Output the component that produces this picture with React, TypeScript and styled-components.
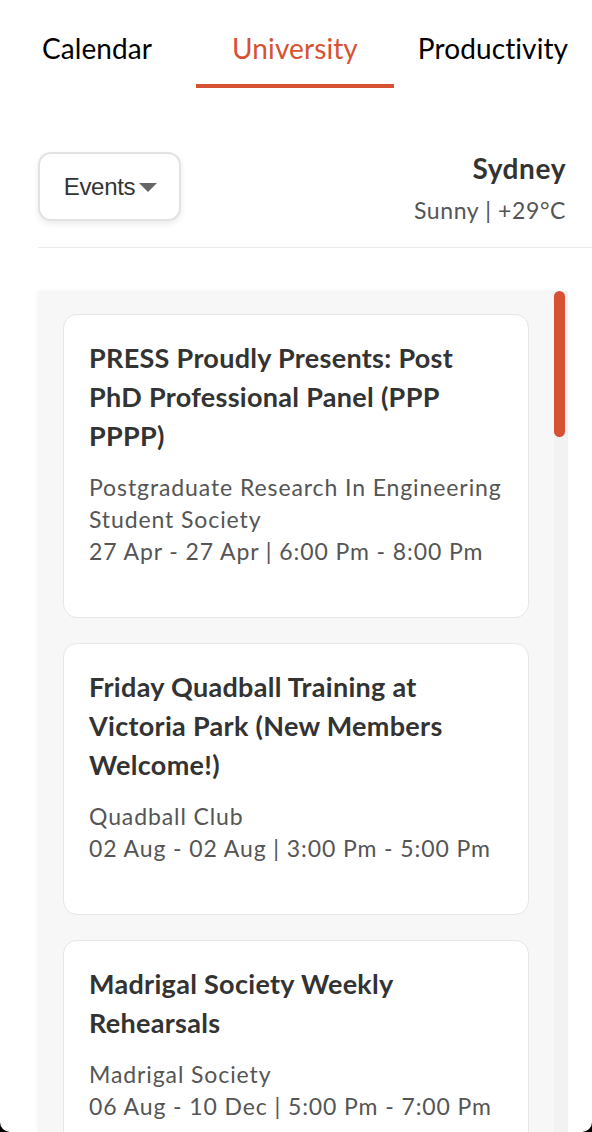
import React, { useState } from "react";
import styled, { createGlobalStyle } from "styled-components";

const GlobalStyle = createGlobalStyle`
  html, body { margin: 0; padding: 0; background: #000; }
  body { font-family: "Lato", "Noto Sans", sans-serif; }
  * { box-sizing: border-box; }
`;

const ACCENT = "#d65233";

const Page = styled.div`
  width: 592px;
  height: 1132px;
  background: #fff;
  border-radius: 0 0 10px 10px;
  overflow: hidden;
  display: flex;
  flex-direction: column;
`;

const TabBar = styled.nav`
  display: flex;
  margin-left: -2px;
`;

const Tab = styled.button<{ $active?: boolean }>`
  width: 200px;
  height: 88px;
  padding: 12px 0 0;
  border: none;
  border-bottom: 4px solid ${(p) => (p.$active ? ACCENT : "transparent")};
  background: none;
  font-family: "Lato", sans-serif;
  font-size: 28px;
  letter-spacing: 0.1px;
  color: ${(p) => (p.$active ? ACCENT : "#000")};
  display: flex;
  align-items: center;
  justify-content: center;
  cursor: pointer;
`;

const Header = styled.header`
  margin: 64px 0 0 38px;
  padding: 0 26px 23px 0;
  border-bottom: 1px solid #ebebeb;
  display: flex;
  justify-content: space-between;
  align-items: flex-start;
`;

const Dropdown = styled.button`
  width: 143px;
  height: 69px;
  border: 2px solid #e2e2e2;
  border-radius: 13px;
  background: #fff;
  box-shadow: 0 3px 6px rgba(0, 0, 0, 0.08);
  display: flex;
  align-items: center;
  justify-content: center;
  gap: 4px;
  font-family: "Liberation Sans", Arial, sans-serif;
  font-size: 24px;
  letter-spacing: -0.3px;
  color: #333;
  padding: 0 0 0 2px;
`;

const Caret = styled.span`
  width: 0;
  height: 0;
  border-left: 9px solid transparent;
  border-right: 9px solid transparent;
  border-top: 9px solid #666;
  margin-top: 1px;
`;

const Weather = styled.div`
  display: flex;
  flex-direction: column;
  align-items: flex-end;
`;

const City = styled.div`
  font-size: 28px;
  font-weight: 700;
  letter-spacing: 0.6px;
  color: #333;
  line-height: 32px;
`;

const Conditions = styled.div`
  font-size: 23px;
  letter-spacing: 0.6px;
  color: #555;
  line-height: 28px;
  margin-top: 12px;
`;

const Panel = styled.section`
  margin: 43px 0 0 38px;
  width: 530px;
  flex: 1;
  min-height: 0;
  background: #f7f7f7;
  box-shadow: -1px 0 4px rgba(0, 0, 0, 0.04);
  display: flex;
`;

const List = styled.div`
  flex: 1;
  padding: 23px 25px;
  display: flex;
  flex-direction: column;
  gap: 25px;
  overflow: hidden;
`;

const Track = styled.div`
  width: 14px;
  background: #f2f2f2;
`;

const Thumb = styled.div`
  width: 11px;
  height: 146px;
  border-radius: 6px;
  background: ${ACCENT};
`;

const Card = styled.article`
  flex-shrink: 0;
  background: #fff;
  border: 1.5px solid #e6e6e6;
  border-radius: 14px;
  padding: 23px 25px 50px;
`;

const Title = styled.h3`
  margin: 0;
  font-size: 27px;
  font-weight: 700;
  letter-spacing: 0.3px;
  line-height: 39px;
  color: #333;
`;

const Meta = styled.p`
  margin: 16px 0 0;
  font-size: 23px;
  letter-spacing: 0.9px;
  line-height: 32px;
  color: #555;
`;

const events = [
  {
    title: "PRESS Proudly Presents: Post PhD Professional Panel (PPP PPPP)",
    org: "Postgraduate Research In Engineering Student Society",
    when: "27 Apr - 27 Apr | 6:00 Pm - 8:00 Pm",
  },
  {
    title: "Friday Quadball Training at Victoria Park (New Members Welcome!)",
    org: "Quadball Club",
    when: "02 Aug - 02 Aug | 3:00 Pm - 5:00 Pm",
  },
  {
    title: "Madrigal Society Weekly Rehearsals",
    org: "Madrigal Society",
    when: "06 Aug - 10 Dec | 5:00 Pm - 7:00 Pm",
  },
];

const tabs = ["Calendar", "University", "Productivity"];

export default function App() {
  const [active, setActive] = useState("University");
  return (
    <>
      <GlobalStyle />
      <Page>
        <TabBar>
          {tabs.map((t) => (
            <Tab key={t} $active={t === active} onClick={() => setActive(t)}>
              {t}
            </Tab>
          ))}
        </TabBar>
        <Header>
          <Dropdown>
            Events
            <Caret />
          </Dropdown>
          <Weather>
            <City>Sydney</City>
            <Conditions>Sunny | +29°C</Conditions>
          </Weather>
        </Header>
        <Panel>
          <List>
            {events.map((e) => (
              <Card key={e.title}>
                <Title>{e.title}</Title>
                <Meta>
                  {e.org}
                  <br />
                  {e.when}
                </Meta>
              </Card>
            ))}
          </List>
          <Track>
            <Thumb />
          </Track>
        </Panel>
      </Page>
    </>
  );
}
